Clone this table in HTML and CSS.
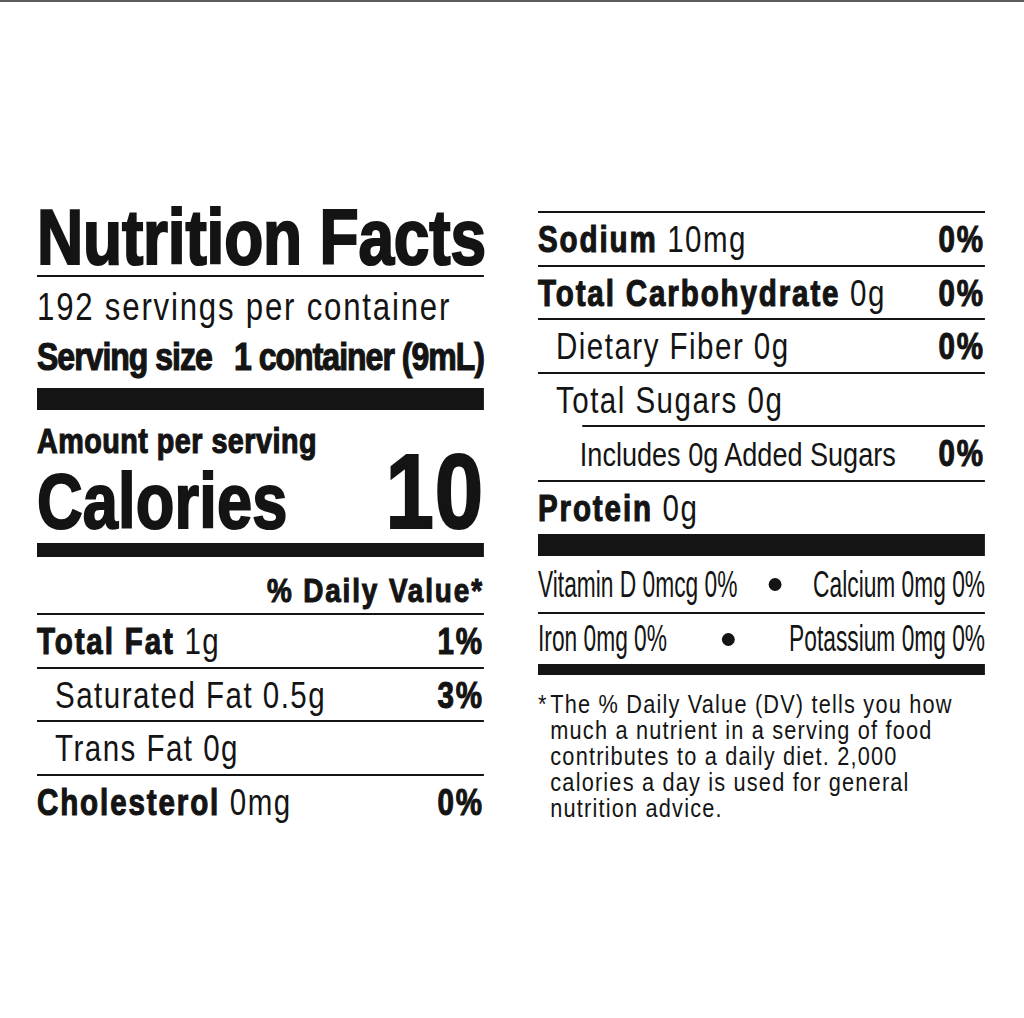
FILE: index.html
```html
<!DOCTYPE html>
<html lang="en">
<head>
<meta charset="utf-8">
<title>Nutrition Facts</title>
<link rel="stylesheet" href="styles.css">
</head>
<body>
<div class="page">
  <div class="label">
    <section class="col">
      <div class="col-inner">
        <h1 class="title">Nutrition Facts</h1>
        <p class="servings">192 servings per container</p>
        <p class="size"><span>Serving size</span><span>1 container (9mL)</span></p>
        <div class="bar bar-xl"></div>
        <div class="cal">
          <div class="cal-text">
            <p class="amount">Amount per serving</p>
            <p class="calories">Calories</p>
          </div>
          <p class="cal-num">10</p>
        </div>
        <div class="bar bar-m"></div>
        <p class="dv">% Daily Value*</p>
        <div class="row ruled"><span><b>Total Fat</b> 1g</span><b>1%</b></div>
        <div class="row ruled indent"><span>Saturated Fat 0.5g</span><b>3%</b></div>
        <div class="row ruled indent"><span>Trans Fat 0g</span></div>
        <div class="row"><span><b>Cholesterol</b> 0mg</span><b>0%</b></div>
      </div>
    </section>

    <section class="col col-right">
      <div class="col-inner">
        <div class="row ruled"><span><b>Sodium</b> 10mg</span><b>0%</b></div>
        <div class="row ruled"><span><b>Total Carbohydrate</b> 0g</span><b>0%</b></div>
        <div class="row ruled indent"><span>Dietary Fiber 0g</span><b>0%</b></div>
        <div class="row indent"><span>Total Sugars 0g</span></div>
        <div class="rule-indent"></div>
        <div class="row ruled indent2"><span class="narrow">Includes 0g Added Sugars</span><b>0%</b></div>
        <div class="row"><span><b>Protein</b> 0g</span></div>
        <div class="bar bar-xl bar-top"></div>
        <div class="vit ruled">
          <div class="vit-inner vit-1">
            <span>Vitamin D 0mcg 0%</span><i class="dot"></i><span>Calcium 0mg 0%</span>
          </div>
        </div>
        <div class="vit">
          <div class="vit-inner vit-2">
            <span>Iron 0mg 0%</span><i class="dot"></i><span>Potassium 0mg 0%</span>
          </div>
        </div>
        <div class="bar bar-s"></div>
        <p class="foot"><span class="ast">*</span>The % Daily Value (DV) tells you how<br>much a nutrient in a serving of food<br>contributes to a daily diet. 2,000<br>calories a day is used for general<br>nutrition advice.</p>
      </div>
    </section>
  </div>
</div>
</body>
</html>
```

FILE: styles.css
```css
html, body {
  margin: 0;
  padding: 0;
  background: #ffffff;
}

body {
  font-family: "Liberation Sans", Arial, sans-serif;
  color: #141414;
}

p, h1 {
  margin: 0;
  font-weight: normal;
}

.page {
  border-top: 2px solid #5c5c5c;
  height: 1016px;
  overflow: hidden;
}

.label {
  display: flex;
  align-items: flex-start;
  gap: 54px;
  padding: 205px 0 0 37px;
}

/* Each column is drawn in a condensed face: the inner box is laid out
   at 545px and compressed horizontally to the 447px column width. */
.col {
  width: 447px;
}

.col-inner {
  width: 545px;
  transform: scaleX(0.82);
  transform-origin: left top;
}

.col-right {
  margin-top: 4px;
  border-top: 2px solid #141414;
}

b {
  font-weight: 700;
  -webkit-text-stroke: 1.1px #141414;
}

/* ---------- left header ---------- */
.title {
  font-size: 78px;
  line-height: 60px;
  font-weight: 700;
  letter-spacing: -0.2px;
  -webkit-text-stroke: 2.2px #141414;
  padding-bottom: 8px;
  border-bottom: 2px solid #141414;
  white-space: nowrap;
}

.servings {
  font-size: 38px;
  line-height: 44px;
  padding-top: 8px;
  letter-spacing: 2.2px;
  white-space: nowrap;
}

.size {
  display: flex;
  justify-content: space-between;
  font-size: 39px;
  line-height: 44px;
  margin-top: 6px;
  font-weight: 700;
  letter-spacing: -1.2px;
  -webkit-text-stroke: 1.2px #141414;
  white-space: nowrap;
}

.bar {
  background: #141414;
}

.bar-xl {
  height: 22px;
  margin-top: 9px;
}

.bar-m {
  height: 14px;
  margin-top: 7px;
}

.bar-s {
  height: 11px;
}

.bar-top {
  margin-top: 1px;
}

.cal {
  display: flex;
  justify-content: space-between;
  align-items: flex-end;
}

.amount {
  font-size: 35px;
  line-height: 36px;
  margin-top: 13px;
  font-weight: 700;
  letter-spacing: 0.6px;
  -webkit-text-stroke: 1.2px #141414;
  white-space: nowrap;
}

.calories {
  font-size: 77px;
  line-height: 70px;
  margin-top: 7px;
  font-weight: 700;
  letter-spacing: 0.2px;
  -webkit-text-stroke: 2px #141414;
}

.cal-num {
  font-size: 106px;
  line-height: 89px;
  font-weight: 700;
  letter-spacing: 1px;
  -webkit-text-stroke: 2.2px #141414;
}

.dv {
  font-size: 34px;
  line-height: 36px;
  margin-top: 15px;
  padding-bottom: 5px;
  border-bottom: 2px solid #141414;
  text-align: right;
  font-weight: 700;
  letter-spacing: 2.3px;
  -webkit-text-stroke: 1.1px #141414;
}

/* ---------- nutrient rows ---------- */
.row {
  display: flex;
  justify-content: space-between;
  align-items: baseline;
  font-size: 36px;
  line-height: 48.5px;
  padding-top: 3px;
  letter-spacing: 1.8px;
  white-space: nowrap;
}

.row b {
  letter-spacing: 2.3px;
}

.ruled {
  border-bottom: 2px solid #141414;
}

.indent {
  padding-left: 22px;
}

.indent2 {
  padding-left: 51px;
}

.narrow {
  font-size: 33px;
  letter-spacing: 0;
}

.rule-indent {
  height: 2px;
  margin-left: 54px;
  background: #141414;
}

/* ---------- vitamins ---------- */
.vit {
  overflow: hidden;
}

.vit-inner {
  width: 727px;
  display: flex;
  justify-content: space-between;
  align-items: baseline;
  font-size: 37px;
  transform: scaleX(0.75);
  transform-origin: left center;
  white-space: nowrap;
}

.vit-1 {
  line-height: 55px;
  padding-top: 1px;
}

.vit-2 {
  line-height: 50px;
}

.dot {
  align-self: center;
  width: 21px;
  height: 13px;
  border-radius: 50%;
  background: #141414;
}

/* ---------- footnote ---------- */
.foot {
  margin-top: 16px;
  font-size: 26.5px;
  line-height: 26px;
  letter-spacing: 1.45px;
  padding-left: 15px;
  white-space: nowrap;
}

.ast {
  margin-left: -15px;
  display: inline-block;
  width: 15px;
  letter-spacing: 0;
}
```
